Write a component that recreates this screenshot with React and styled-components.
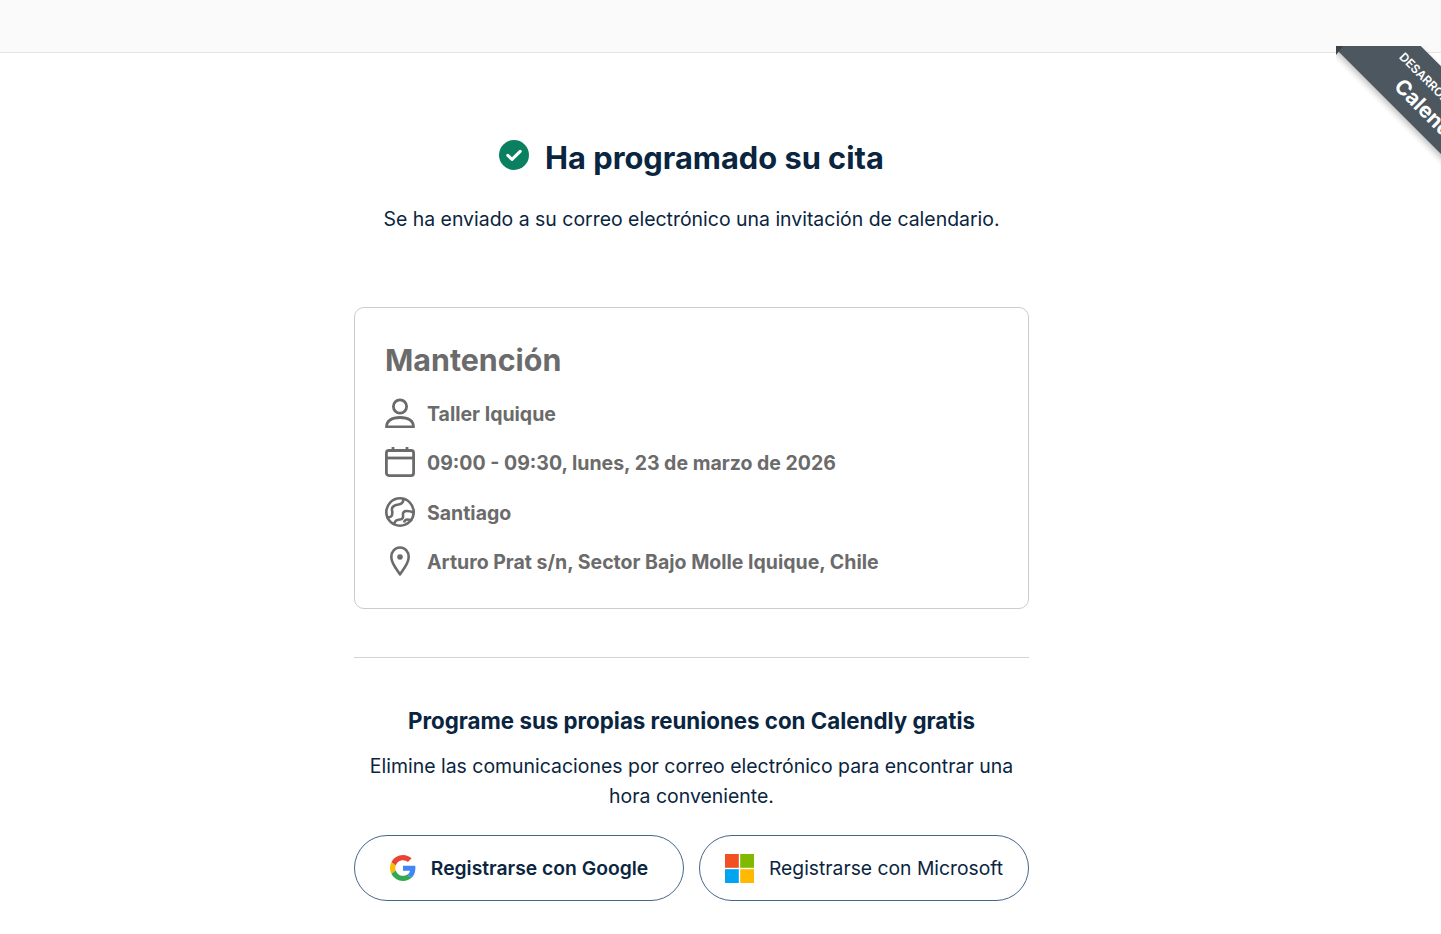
import React from "react";
import styled, {createGlobalStyle} from "styled-components";

const GlobalStyle = createGlobalStyle`
  html, body {
    margin: 0;
    padding: 0;
    height: 934px;
    overflow: hidden;
    background: #fff;
    font-family: Inter, Lato, sans-serif;
    color: #0a2540;
  }
`;

const Page = styled.div`
  position: relative;
  height: 934px;
  overflow: hidden;
`;
const TopBar = styled.div`
  height: 52px;
  background: #fafafa;
  border-bottom: 1px solid #e6e6e6;
`;
const Content = styled.main`
  width: 675px;
  margin-left: 354px;
  padding-top: 87px;
`;
const Heading = styled.h1`
  display: flex;
  justify-content: center;
  align-items: flex-start;
  gap: 16px;
  margin: 0;
  font-size: 30.8px;
  line-height: 36px;
  font-weight: 700;
  color: #0a2540;
`;
const Subtitle = styled.p`
  margin: 28px 0 0;
  text-align: center;
  font-size: 19.45px;
  line-height: 30px;
  color: #0a2540;
`;
const Card = styled.section`
  margin-top: 73px;
  height: 302px;
  box-sizing: border-box;
  padding: 31px 30px 0;
  border: 1px solid #ccc;
  border-radius: 10px;
`;
const EventName = styled.h2`
  margin: 0 0 17px;
  font-size: 30.4px;
  line-height: 42px;
  font-weight: 700;
  color: #6b6b6b;
`;
const Row = styled.div`
  display: flex;
  align-items: center;
  gap: 12px;
  height: 30px;
  margin-bottom: 19.4px;
  font-size: 19.5px;
  font-weight: 700;
  color: #6b6b6b;
`;
const RowText = styled.span`
  padding-top: 2px;
`;
const Divider = styled.hr`
  margin: 48px 0 0;
  border: 0;
  border-top: 1px solid #d4d4d4;
`;
const PromoTitle = styled.h3`
  margin: 48px 0 0;
  text-align: center;
  font-size: 22.3px;
  line-height: 30px;
  font-weight: 700;
  color: #0a2540;
`;
const PromoText = styled.p`
  margin: 15px 0 0;
  padding: 0 10px;
  text-align: center;
  font-size: 19.45px;
  line-height: 30px;
  color: #0a2540;
`;
const Buttons = styled.div`
  display: grid;
  grid-template-columns: 1fr 1fr;
  gap: 15px;
  margin-top: 24px;
`;
const SignupButton = styled.button`
  display: flex;
  align-items: center;
  justify-content: center;
  gap: 15px;
  height: 66px;
  padding: 0;
  border: 1px solid #476788;
  border-radius: 33px;
  background: #fff;
  color: #0a2540;
  font-family: inherit;
  font-size: 19.3px;
  font-weight: ${props => (props.$strong ? 600 : 400)};
`;
const RibbonClip = styled.div`
  position: absolute;
  top: 46px;
  right: 0;
  width: 105px;
  height: 120px;
  overflow: hidden;
`;
const Ribbon = styled.div`
  position: absolute;
  left: -40px;
  top: 17.75px;
  width: 260px;
  height: 61.5px;
  box-sizing: border-box;
  padding: 8px 0 0 34px;
  display: flex;
  flex-direction: column;
  align-items: center;
  justify-content: center;
  background: #4d5760;
  color: #fff;
  transform: rotate(45deg);
  box-shadow: 0 3px 6px rgba(0, 0, 0, 0.25);
`;
const RibbonSmall = styled.span`
  font-size: 12px;
  line-height: 15px;
  font-weight: 600;
  white-space: nowrap;
`;
const RibbonBig = styled.span`
  font-size: 21px;
  line-height: 30px;
  font-weight: 700;
  white-space: nowrap;
`;
const Fold = styled.span`
  position: absolute;
  left: 0;
  top: 0;
  width: 0;
  height: 0;
  border-top: 9px solid #3a424a;
  border-right: 7px solid transparent;
`;

const CheckIcon = () => (
    <svg width="30" height="30" viewBox="0 0 30 30" style={{flex: "none"}}>
        <circle cx="15" cy="15" r="15" fill="#0a8061" />
        <path d="M8.800 15.400l4.200 4 8.200-8" fill="none" stroke="#fff" strokeWidth="3" strokeLinecap="round" strokeLinejoin="round" />
    </svg>
);
const PersonIcon = () => (
    <svg width="30" height="30" viewBox="0 0 30 30" fill="none" stroke="#6b6b6b" strokeWidth="2.800">
        <circle cx="15" cy="8.500" r="6.600" />
        <path d="M1.500 29h27c0-6-5-9.500-13.500-9.500S1.500 23 1.500 29z" strokeLinejoin="round" />
    </svg>
);
const CalendarIcon = () => (
    <svg width="30" height="30" viewBox="0 0 30 30" fill="none" stroke="#6b6b6b" strokeWidth="2.800">
        <rect x="1.400" y="3.500" width="27.200" height="25.100" rx="2.500" />
        <path d="M1 11h28" />
        <path d="M8 0v4M22 0v4" />
    </svg>
);
const GlobeIcon = () => (
    <svg width="30" height="30" viewBox="0 0 30 30" fill="none" stroke="#6b6b6b" strokeWidth="2.600">
        <circle cx="15" cy="15" r="13.700" />
        <path d="M18 1.500c1 3-1 5.500-4.500 6-3.500.5-7 2-6.500 5.500.5 3 1 5-1 6.500-1.500 1-3 1-4.500.5" />
        <path d="M9 27.500c.5-3 3-5 6-5 2.500 0 3.500-2 3-4.500-.5-2.500 1-4 3.500-4 2.500 0 5 .5 7 1.500" />
        <path d="M19 25.500c.5-2 2-3 3.500-3 2 0 3.500.5 4.500 1.500" />
    </svg>
);
const PinIcon = () => (
    <svg width="30" height="30" viewBox="0 0 30 30" fill="none" stroke="#6b6b6b" strokeWidth="2.600">
        <path d="M15 28.500c-1.500-3-8.700-10.500-8.700-17.500 0-5.500 3.900-9.500 8.700-9.500s8.700 4 8.700 9.500c0 7-7.200 14.500-8.700 17.500z" strokeLinejoin="round" />
        <circle cx="15" cy="11" r="2.800" fill="#6b6b6b" stroke="none" />
    </svg>
);
const GoogleIcon = () => (
    <svg width="26" height="26" viewBox="0 0 48 48">
        <path fill="#EA4335" d="M24 9.500c3.500 0 6.700 1.300 9.100 3.500l6.800-6.800C35.800 2.400 30.200 0 24 0 14.600 0 6.500 5.400 2.600 13.200l7.900 6.100C12.400 13.600 17.700 9.500 24 9.500z" />
        <path fill="#4285F4" d="M46.900 24.500c0-1.600-.1-3.100-.4-4.500H24v9h12.900c-.6 3-2.300 5.500-4.800 7.200l7.700 6c4.500-4.200 7.100-10.400 7.100-17.700z" />
        <path fill="#FBBC05" d="M10.500 28.700c-.5-1.500-.8-3-.8-4.700s.3-3.200.8-4.700l-7.900-6.100C.9 16.500 0 20.100 0 24s.9 7.500 2.600 10.800l7.900-6.100z" />
        <path fill="#34A853" d="M24 48c6.500 0 11.900-2.100 15.800-5.800l-7.700-6c-2.100 1.400-4.900 2.300-8.100 2.300-6.300 0-11.600-4.200-13.500-9.800l-7.900 6.100C6.500 42.600 14.600 48 24 48z" />
    </svg>
);
const MicrosoftIcon = () => (
    <svg width="29" height="29" viewBox="0 0 29 29">
        <rect width="13.800" height="13.800" fill="#F25022" />
        <rect x="15.200" width="13.800" height="13.800" fill="#7FBA00" />
        <rect y="15.200" width="13.800" height="13.800" fill="#00A4EF" />
        <rect x="15.200" y="15.200" width="13.800" height="13.800" fill="#FFB900" />
    </svg>
);

const App = () => {
    return (
        <Page>
            <GlobalStyle />
            <TopBar />
            <Content>
                <Heading>
                    <CheckIcon />
                    Ha programado su cita
                </Heading>
                <Subtitle>Se ha enviado a su correo electrónico una invitación de calendario.</Subtitle>
                <Card>
                    <EventName>Mantención</EventName>
                    <Row><PersonIcon /><RowText>Taller Iquique</RowText></Row>
                    <Row><CalendarIcon /><RowText>09:00 - 09:30, lunes, 23 de marzo de 2026</RowText></Row>
                    <Row><GlobeIcon /><RowText>Santiago</RowText></Row>
                    <Row><PinIcon /><RowText>Arturo Prat s/n, Sector Bajo Molle Iquique, Chile</RowText></Row>
                </Card>
                <Divider />
                <PromoTitle>Programe sus propias reuniones con Calendly gratis</PromoTitle>
                <PromoText>Elimine las comunicaciones por correo electrónico para encontrar una hora conveniente.</PromoText>
                <Buttons>
                    <SignupButton $strong><GoogleIcon />Registrarse con Google</SignupButton>
                    <SignupButton><MicrosoftIcon />Registrarse con Microsoft</SignupButton>
                </Buttons>
            </Content>
            <RibbonClip>
                <Ribbon>
                    <RibbonSmall>DESARROLLADO POR</RibbonSmall>
                    <RibbonBig>Calendly</RibbonBig>
                </Ribbon>
                <Fold />
            </RibbonClip>
        </Page>
    );
};

export default App;
